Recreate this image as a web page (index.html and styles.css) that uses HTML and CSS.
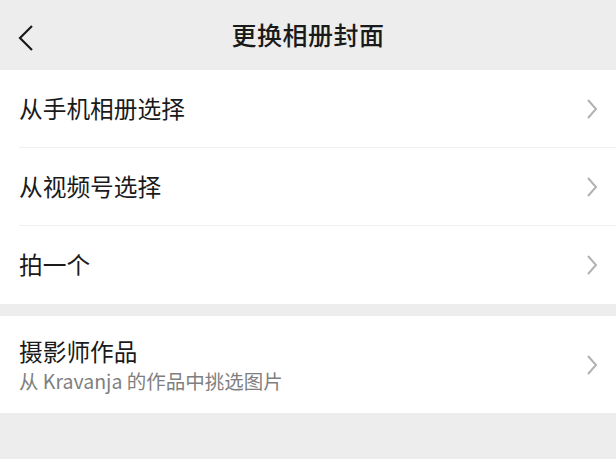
FILE: index.html
```html
<!DOCTYPE html>
<html lang="zh">
<head>
<meta charset="utf-8">
<link rel="stylesheet" href="styles.css">
</head>
<body>
<div class="page">
  <header class="nav">
    <svg class="back" width="16" height="28" viewBox="0 0 16 28"><path d="M14 2 L2 14 L14 26" fill="none" stroke="#1a1a1a" stroke-width="2.2"/></svg>
    <h1 class="title">更换相册封面</h1>
  </header>
  <section class="group">
    <div class="row"><span class="label">从手机相册选择</span><svg class="chev" width="12" height="22" viewBox="0 0 12 22"><path d="M2 2 L10 11 L2 20" fill="none" stroke="#b2b2b2" stroke-width="2"/></svg></div>
    <div class="row"><span class="label">从视频号选择</span><svg class="chev" width="12" height="22" viewBox="0 0 12 22"><path d="M2 2 L10 11 L2 20" fill="none" stroke="#b2b2b2" stroke-width="2"/></svg></div>
    <div class="row"><span class="label">拍一个</span><svg class="chev" width="12" height="22" viewBox="0 0 12 22"><path d="M2 2 L10 11 L2 20" fill="none" stroke="#b2b2b2" stroke-width="2"/></svg></div>
  </section>
  <section class="group second">
    <div class="row tall">
      <div class="texts">
        <span class="label">摄影师作品</span>
        <span class="sub">从 Kravanja 的作品中挑选图片</span>
      </div>
      <svg class="chev" width="12" height="22" viewBox="0 0 12 22"><path d="M2 2 L10 11 L2 20" fill="none" stroke="#b2b2b2" stroke-width="2"/></svg>
    </div>
  </section>
</div>
</body>
</html>
```
FILE: styles.css
```css
html, body { margin: 0; padding: 0; }
body {
  background: #ededed;
  font-family: "Noto Sans CJK SC", "Noto Sans", sans-serif;
  color: #1a1a1a;
}
.page { width: 616px; height: 459px; overflow: hidden; }
.nav {
  height: 70px;
  position: relative;
  display: flex;
  align-items: center;
  justify-content: center;
  background: #ededed;
}
.back { position: absolute; left: 18px; top: 24px; }
.title {
  margin: 0;
  font-size: 25px;
  font-weight: 500;
  letter-spacing: 0.5px;
  padding-bottom: 2px;
}
.group { background: #fff; padding-left: 19px; }
.second { margin-top: 12px; }
.row {
  height: 78px;
  display: flex;
  align-items: center;
  justify-content: space-between;
  padding-right: 18px;
  box-shadow: inset 0 -1px 0 #efefef;
}
.row:last-child { box-shadow: none; }
.row.tall { height: 97px; }
.label { font-size: 23.7px; line-height: 30px; margin-top: -3px; }
.row.tall .label { margin-top: 0; }
.texts { display: flex; flex-direction: column; }
.sub { font-size: 19.5px; color: #7f7f7f; line-height: 26px; margin-top: 2px; }
.chev { display: block; }
```
